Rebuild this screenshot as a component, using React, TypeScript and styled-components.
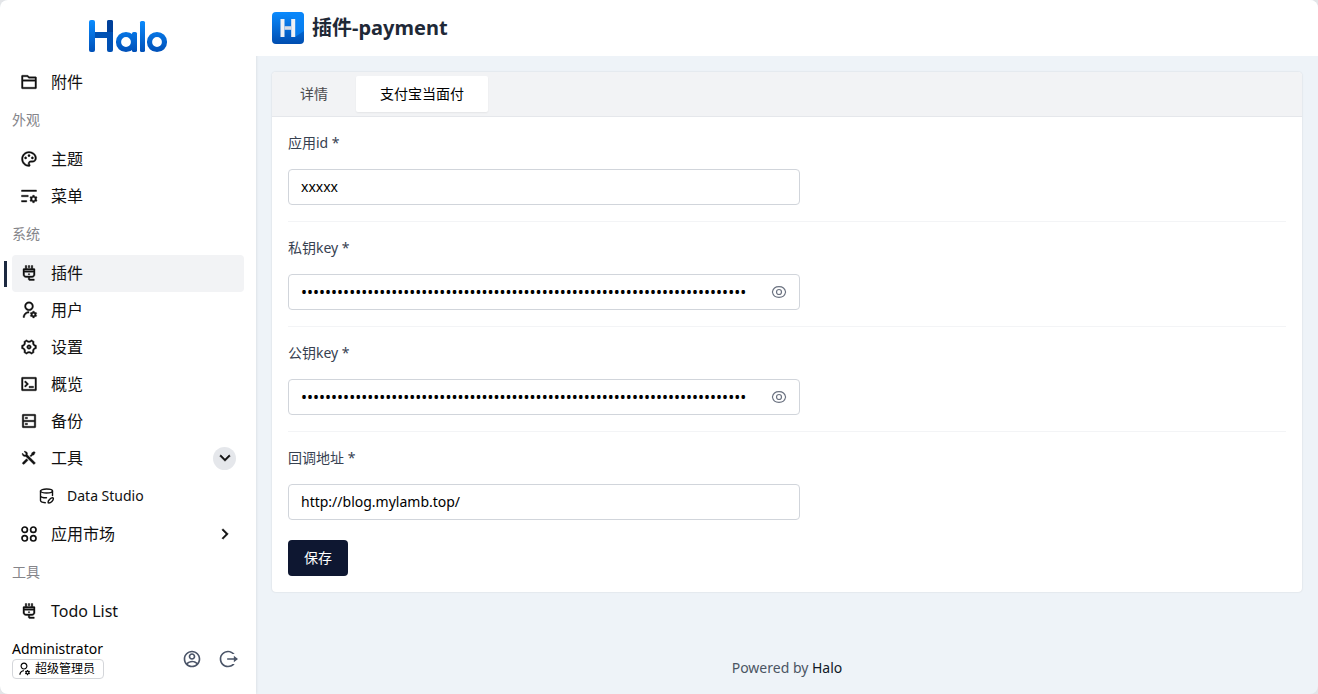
import React, { useState } from 'react';
import styled, { createGlobalStyle, css } from 'styled-components';
import { IconContext } from 'react-icons';
import {
  RiFolder2Line,
  RiPaletteLine,
  RiListSettingsLine,
  RiPlug2Line,
  RiUserSettingsLine,
  RiSettings4Line,
  RiTerminalBoxLine,
  RiServerLine,
  RiToolsFill,
  RiAccountCircleLine,
  RiLogoutCircleRLine,
  RiArrowDownSLine,
  RiArrowRightSLine,
} from 'react-icons/ri';

const GlobalStyle = createGlobalStyle`
  *, *::before, *::after { box-sizing: border-box; }
  body {
    margin: 0;
    background: #e3e5e8;
    color: #000;
    font-family: "Noto Sans", "Noto Sans CJK SC", sans-serif;
    font-size: 14px;
    line-height: 20px;
  }
  button, input { font: inherit; color: inherit; }
  button { cursor: pointer; }
`;

const Shell = styled.div`
  display: flex;
  min-height: 100vh;
  border-radius: 8px;
  overflow: hidden;
  background: #eef3f8;
`;

const Sidebar = styled.aside`
  display: flex;
  flex-direction: column;
  flex: none;
  width: 256px;
  background: #fff;
  box-shadow: 0 0 3px rgba(0, 0, 0, 0.12);
`;

const Brand = styled.a`
  display: flex;
  justify-content: center;
  height: 64px;
  padding-top: 19px;
`;

const Nav = styled.nav`
  flex: 1;
  padding: 0 12px;
`;

const NavHeading = styled.h2`
  margin: 0;
  padding: 9px 0 11px;
  font-size: 14px;
  font-weight: 400;
  line-height: 20px;
  color: #85858a;
`;

const NavItem = styled.a<{ $active?: boolean }>`
  position: relative;
  display: flex;
  align-items: center;
  gap: 13px;
  height: 37px;
  padding: 0 8px 1px;
  border-radius: 4px;
  font-size: 16px;
  color: #111;
  text-decoration: none;
  svg { flex: none; }
  ${(p) =>
    p.$active &&
    css`
      background: #f2f3f5;
      &::before {
        content: '';
        position: absolute;
        left: -8px;
        top: 6px;
        width: 3px;
        height: 26px;
        background: #1c2940;
      }
    `}
`;

const SubItem = styled(NavItem)`
  gap: 12px;
  height: 39px;
  padding-left: 27px;
  font-size: 14px;
`;

const NavLabel = styled.span`
  flex: 1;
`;

const Chevron = styled.span<{ $open?: boolean }>`
  display: grid;
  place-items: center;
  width: 23px;
  height: 23px;
  border-radius: 50%;
  background: ${(p) => (p.$open ? '#e5e7eb' : 'transparent')};
`;

const Profile = styled.footer`
  display: flex;
  align-items: center;
  gap: 16px;
  height: 64px;
  padding: 0 18px 6px 12px;
`;

const ProfileInfo = styled.div`
  display: flex;
  flex-direction: column;
  align-items: flex-start;
  flex: 1;
`;

const RoleTag = styled.span`
  display: flex;
  align-items: center;
  gap: 4px;
  height: 20px;
  padding: 0 8px 0 4px;
  border: 1px solid #d4d6da;
  border-radius: 4px;
  font-size: 12px;
`;

const IconButton = styled.button`
  display: grid;
  place-items: center;
  padding: 0;
  border: 0;
  background: none;
  color: #4b5568;
`;

const Main = styled.main`
  display: flex;
  flex-direction: column;
  flex: 1;
  min-width: 0;
`;

const Header = styled.header`
  display: flex;
  align-items: center;
  gap: 8px;
  height: 56px;
  padding: 0 16px;
  background: #fff;
`;

const Title = styled.h1`
  margin: 0;
  font-size: 20px;
  font-weight: 700;
  line-height: 28px;
  color: #1f2937;
`;

const Card = styled.section`
  margin: 16px;
  border-radius: 4px;
  background: #fff;
  box-shadow: 0 0 2px rgba(0, 0, 0, 0.14);
`;

const Tabs = styled.div`
  display: flex;
  gap: 4px;
  padding: 4px;
  border-bottom: 1px solid #e5e7eb;
  border-radius: 4px 4px 0 0;
  background: #f2f3f5;
`;

const Tab = styled.button<{ $active: boolean }>`
  height: 36px;
  padding: 0 24px;
  border: 0;
  border-radius: 2px;
  background: ${(p) => (p.$active ? '#fff' : 'transparent')};
  color: ${(p) => (p.$active ? '#000' : '#4a4a4d')};
  box-shadow: ${(p) => (p.$active ? '0 1px 2px rgba(0, 0, 0, 0.06)' : 'none')};
`;

const Form = styled.form`
  padding: 16px;
`;

const Field = styled.div`
  display: flex;
  flex-direction: column;
  gap: 16px;
  & + & {
    margin-top: 16px;
    padding-top: 16px;
    border-top: 1px solid #f3f4f6;
  }
`;

const Label = styled.label`
  color: #374151;
`;

const InputBox = styled.div`
  display: flex;
  align-items: center;
  width: 100%;
  max-width: 512px;
  height: 36px;
  border: 1px solid #d1d5db;
  border-radius: 4px;
`;

const Input = styled.input`
  flex: 1;
  min-width: 0;
  height: 34px;
  margin: 0 12px;
  padding: 0 0 2px;
  border: 0;
  outline: 0;
  background: none;
  &[type='password'] {
    padding: 0;
    font-size: 16px;
  }
`;

const RevealButton = styled(IconButton)`
  width: 40px;
  height: 34px;
  color: #6b7280;
`;

const SaveButton = styled.button`
  height: 36px;
  margin-top: 20px;
  padding: 0 16px;
  border: 0;
  border-radius: 4px;
  background: #0e1731;
  color: #fff;
`;

const PageFooter = styled.footer`
  margin-top: auto;
  padding: 16px;
  text-align: center;
  color: #4b5563;
  a { color: #111827; text-decoration: none; }
`;

const HaloLogo = () => (
  <svg width="80" height="34" viewBox="0 0 80 34" fill="none" role="img" aria-label="Halo">
    <defs>
      <linearGradient id="blue" x1="0" y1="1" x2="0" y2="33" gradientUnits="userSpaceOnUse">
        <stop stopColor="#0a8cff" />
        <stop offset="1" stopColor="#0050b8" />
      </linearGradient>
    </defs>
    <path d="M4 16h20" stroke="#0052b4" strokeWidth="6" />
    <rect x="19" y="1" width="6" height="32" rx="2" fill="#0050b4" />
    <path d="M19 13V3a2 2 0 0 1 2-2h2a2 2 0 0 1 2 2v10z" fill="#00409a" />
    <rect x="1" y="1" width="6" height="32" rx="2" fill="url(#blue)" />
    <circle cx="38" cy="23" r="7.5" stroke="url(#blue)" strokeWidth="5.2" />
    <rect x="44" y="13" width="5" height="20" rx="1.6" fill="url(#blue)" />
    <rect x="52" y="2" width="5" height="31" rx="1.6" fill="url(#blue)" />
    <circle cx="69" cy="23" r="7.5" stroke="url(#blue)" strokeWidth="5.2" />
  </svg>
);

const PluginLogo = () => (
  <svg width="32" height="32" viewBox="0 0 32 32" fill="none" aria-hidden="true">
    <defs>
      <linearGradient id="tile" x1="0" y1="0" x2="0" y2="32" gradientUnits="userSpaceOnUse">
        <stop stopColor="#0a8bff" />
        <stop offset="1" stopColor="#004db0" />
      </linearGradient>
    </defs>
    <rect width="32" height="32" rx="4" fill="url(#tile)" />
    <path d="M23 25 32 19V4a4 4 0 0 0-4-4H14l9 8z" fill="#0a86f8" opacity="0.75" />
    <path d="M10.500 7v18M21.200 7v18" stroke="#eef1f5" strokeWidth="4" />
    <path d="M12.500 16h6.700" stroke="#d5dbe4" strokeWidth="3.600" />
  </svg>
);

const DataStudioIcon = () => (
  <svg width="16" height="16" viewBox="0 0 16 16" fill="none" stroke="currentColor" strokeWidth="1.4" strokeLinecap="round" strokeLinejoin="round" aria-hidden="true">
    <ellipse cx="7.5" cy="3" rx="6" ry="2" />
    <path d="M1.500 3v9.500c0 1.200 2 2 4.800 2.200M13.500 3v4.500M1.500 7.700c0 1.300 2.500 2.100 6 2.100" />
    <path d="M9.300 14.900c-1-2 2.600-5.600 4.900-5 .9 2.200-2.700 5.600-4.900 5z" />
  </svg>
);

const AppsIcon = () => (
  <svg width="18" height="18" viewBox="0 0 18 18" fill="none" stroke="currentColor" strokeWidth="1.700" aria-hidden="true">
    <circle cx="4.700" cy="4.700" r="2.700" />
    <circle cx="13.300" cy="4.700" r="2.700" />
    <circle cx="4.700" cy="13.300" r="2.700" />
    <circle cx="13.300" cy="13.300" r="2.700" />
  </svg>
);

const EyeIcon = () => (
  <svg width="16" height="16" viewBox="0 0 16 16" fill="none" stroke="currentColor" strokeWidth="1.200" aria-hidden="true">
    <path d="M1.400 8C2 4.800 4.700 2.600 8 2.600S14 4.800 14.600 8C14 11.200 11.300 13.400 8 13.400S2 11.200 1.400 8z" />
    <circle cx="8" cy="8" r="2.500" />
  </svg>
);

const systemItems = [
  { label: '插件', icon: RiPlug2Line, active: true },
  { label: '用户', icon: RiUserSettingsLine },
  { label: '设置', icon: RiSettings4Line },
  { label: '概览', icon: RiTerminalBoxLine },
  { label: '备份', icon: RiServerLine },
];

const fields = [
  { id: 'appId', label: '应用id', value: 'xxxxx' },
  { id: 'privateKey', label: '私钥key', value: 'k'.repeat(120), secret: true },
  { id: 'publicKey', label: '公钥key', value: 'k'.repeat(120), secret: true },
  { id: 'notifyUrl', label: '回调地址', value: 'http://blog.mylamb.top/' },
];

function FormField({ id, label, value, secret }: { id: string; label: string; value: string; secret?: boolean }) {
  const [shown, setShown] = useState(false);
  return (
    <Field>
      <Label htmlFor={id}>{label} *</Label>
      <InputBox>
        <Input id={id} type={secret && !shown ? 'password' : 'text'} defaultValue={value} required />
        {secret && (
          <RevealButton type="button" aria-label="显示" onClick={() => setShown(!shown)}>
            <EyeIcon />
          </RevealButton>
        )}
      </InputBox>
    </Field>
  );
}

const navIcons = { attr: { strokeWidth: '0.5' } };

export default function App() {
  const [tab, setTab] = useState('支付宝当面付');
  return (
    <>
      <GlobalStyle />
      <Shell>
        <Sidebar>
          <Brand href="#"><HaloLogo /></Brand>
          <IconContext.Provider value={navIcons}>
            <Nav>
              <NavItem href="#"><RiFolder2Line size={18} /><NavLabel>附件</NavLabel></NavItem>
              <NavHeading>外观</NavHeading>
              <NavItem href="#"><RiPaletteLine size={18} /><NavLabel>主题</NavLabel></NavItem>
              <NavItem href="#"><RiListSettingsLine size={18} /><NavLabel>菜单</NavLabel></NavItem>
              <NavHeading>系统</NavHeading>
              {systemItems.map(({ label, icon: Icon, active }) => (
                <NavItem key={label} href="#" $active={active}><Icon size={18} /><NavLabel>{label}</NavLabel></NavItem>
              ))}
              <NavItem href="#">
                <RiToolsFill size={18} /><NavLabel>工具</NavLabel>
                <Chevron $open><RiArrowDownSLine size={20} /></Chevron>
              </NavItem>
              <SubItem href="#"><DataStudioIcon /><NavLabel>Data Studio</NavLabel></SubItem>
              <NavItem href="#">
                <AppsIcon /><NavLabel>应用市场</NavLabel>
                <Chevron><RiArrowRightSLine size={20} /></Chevron>
              </NavItem>
              <NavHeading>工具</NavHeading>
              <NavItem href="#"><RiPlug2Line size={18} /><NavLabel>Todo List</NavLabel></NavItem>
            </Nav>
          </IconContext.Provider>
          <Profile>
            <ProfileInfo>
              <span>Administrator</span>
              <RoleTag><RiUserSettingsLine size={14} />超级管理员</RoleTag>
            </ProfileInfo>
            <IconButton aria-label="个人中心"><RiAccountCircleLine size={20} /></IconButton>
            <IconButton aria-label="退出登录"><RiLogoutCircleRLine size={20} /></IconButton>
          </Profile>
        </Sidebar>
        <Main>
          <Header><PluginLogo /><Title>插件-payment</Title></Header>
          <Card>
            <Tabs role="tablist">
              {['详情', '支付宝当面付'].map((name) => (
                <Tab key={name} type="button" role="tab" aria-selected={tab === name} $active={tab === name} onClick={() => setTab(name)}>{name}</Tab>
              ))}
            </Tabs>
            <Form onSubmit={(e) => e.preventDefault()}>
              {fields.map((f) => <FormField key={f.id} {...f} />)}
              <SaveButton type="submit">保存</SaveButton>
            </Form>
          </Card>
          <PageFooter>Powered by <a href="#">Halo</a></PageFooter>
        </Main>
      </Shell>
    </>
  );
}
